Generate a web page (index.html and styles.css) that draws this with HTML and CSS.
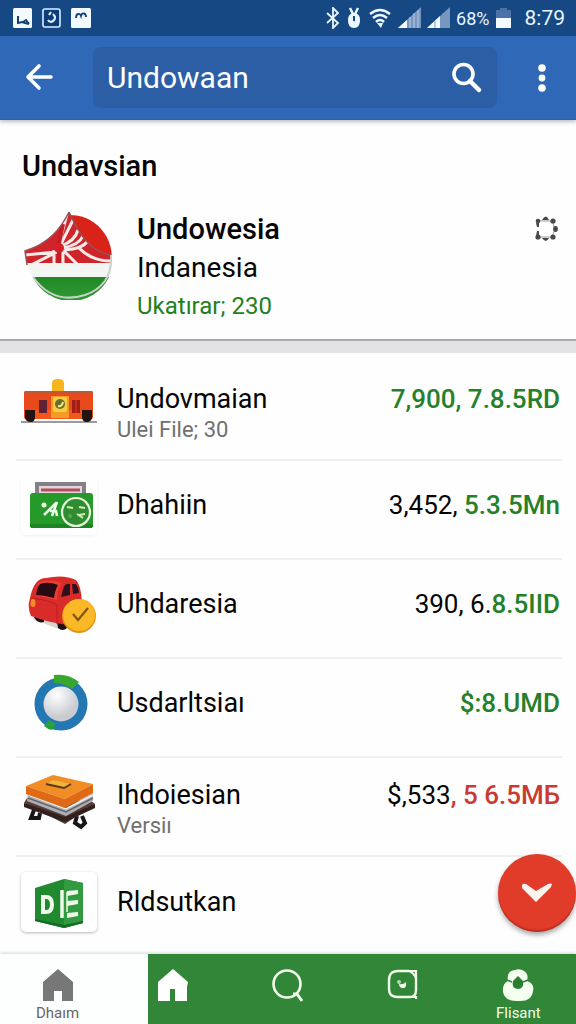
FILE: index.html
```html
<!DOCTYPE html>
<html lang="en">
<head>
<meta charset="utf-8">
<meta name="viewport" content="width=device-width, initial-scale=1">
<title>Undowaan</title>
<link rel="stylesheet" href="styles.css">
</head>
<body>
<div class="screen">
  <div class="status">
    <div class="status-group status-left">
      <svg width="19" height="20" viewBox="0 0 19 20"><rect width="19" height="20" rx="1.5" fill="#f3fbff"/><path d="M5 8v7l4-1 3 1 4 1M10 14l3-2 3 4" fill="none" stroke="#163f75" stroke-width="2"/></svg>
      <svg width="19" height="20" viewBox="0 0 19 20"><rect x="1" y="1" width="17" height="18" rx="2" fill="#0d3d7b" stroke="#d9f1ff" stroke-width="1.6"/><path d="M9 4l-2 3M11 6q4 4 0 7-3 2-5-1" fill="none" stroke="#d9f1ff" stroke-width="2.200"/></svg>
      <svg width="20" height="20" viewBox="0 0 20 20"><rect width="20" height="20" rx="1.5" fill="#f3fbff"/><path d="M5 10c0-5 4-5 5-2 1-4 5-3 5 1" fill="none" stroke="#163f75" stroke-width="1.8"/></svg>
    </div>
    <div class="status-group">
      <svg width="14" height="22" viewBox="0 0 14 22"><path d="M1 6l11 10-5 5V1l5 5L1 16" fill="none" stroke="#eaf7ff" stroke-width="1.8"/></svg>
      <svg width="16" height="22" viewBox="3 0 16 22"><path d="M7 1l3 6M15 1l-3 6" stroke="#eaf7ff" stroke-width="2.500"/><path d="M11 6c4 0 6 3 6 7 0 5-2 8-6 8s-6-3-6-8c0-4 2-7 6-7z" fill="#eaf7ff"/><path d="M10 9v4q0 2 2 1V9z" fill="#174886"/></svg>
      <svg width="24" height="22" viewBox="0 0 24 22"><path d="M2 7q10-8 20 0M5 11q7-6 14 0M8 15q4-4 8 0" fill="none" stroke="#eaf7ff" stroke-width="2.500"/><path d="M9 16h6l-2 5z" fill="#eaf7ff"/></svg>
      <svg width="23" height="22" viewBox="0 0 23 22"><path d="M0 21L23 0v21z" fill="#7897c0"/><path d="M0 21l9-8v8z" fill="#f1faff"/><path d="M12 10v11M16 6v15M20 3v18" stroke="#b9cce2"/></svg>
      <svg width="23" height="22" viewBox="0 0 23 22"><path d="M0 21L23 0v21z" fill="#7897c0"/><path d="M0 21l13-12v12z" fill="#f1faff"/><path d="M8 14v7M16 6v15M20 3v18" stroke="#7897c0"/></svg>
      <span class="battery-text">68%</span>
      <svg width="15" height="22" viewBox="0 0 15 22"><path d="M0 3h4V1h7v2h4v8H0z" fill="#4c73a9"/><path d="M0 11h15v10H0z" fill="#f4fbff"/></svg>
      <span class="clock">8:79</span>
    </div>
  </div>

  <header class="appbar">
    <button class="icon-button" aria-label="Back"><svg width="28" height="30" viewBox="0 0 28 30"><path d="M26 14H3M14 3L3 14l11 11" fill="none" stroke="#fff" stroke-width="3.6" stroke-linecap="round" stroke-linejoin="round"/></svg></button>
    <form class="search">
      <input class="search-input" type="text" aria-label="Search" value="Undowaan">
      <button class="icon-button" type="button" aria-label="Search"><svg width="32" height="32" viewBox="0 0 32 32"><circle cx="12.500" cy="12" r="9.500" fill="none" stroke="#fff" stroke-width="3.6"/><path d="M19 19l9 9" stroke="#fff" stroke-width="4.500" stroke-linecap="round"/></svg></button>
    </form>
    <button class="icon-button" aria-label="More options"><svg width="10" height="30" viewBox="0 0 10 30" fill="#fff"><circle cx="5" cy="5" r="3.8"/><circle cx="5" cy="15" r="3.4"/><circle cx="5" cy="25" r="3.8"/></svg></button>
  </header>

  <main class="content">
    <section class="summary">
      <h1 class="summary-title">Undavsian</h1>
      <div class="profile">
        <svg width="92" height="90" viewBox="-1 0 92 90">
          <defs>
            <clipPath id="cloth"><path d="M46 2C38 18 27 33 2 41l2 14h84l-1-12C67 42 56 24 46 2z"/></clipPath>
            <linearGradient id="green" x2="0" y2="1"><stop stop-color="#218824"/><stop offset="1" stop-color="#309936"/></linearGradient>
          </defs>
          <path d="M44 5a42 42 0 0 1 44 50H48z" fill="#d92218"/>
          <path d="M4 53h85l-5 15H10z" fill="#f3f5f2"/>
          <path d="M10 67h76a42 42 0 0 1-76 0z" fill="url(#green)"/>
          <g clip-path="url(#cloth)">
            <path d="M0 0h92v56H0z" fill="#cf2429"/>
            <path d="M35 38L44 4M37 36L50 10M38 36q14-5 17-16M40 38q16-3 20-12M42 40q17-1 23-9" fill="none" stroke="#f7e9e8" stroke-width="3"/>
            <path d="M33 42L2 45M34 42L4 57M31 40v18M40 40v18M40 40l16 16M56 38q14 14 34 13" fill="none" stroke="#f7e9e8" stroke-width="3"/>
            <path d="M35 38L40 14M36 40v18" stroke="#c61d23" stroke-width="4"/>
            <circle cx="36" cy="38" r="5" fill="#d81f26"/>
          </g>
          <path d="M4 54h84" stroke="#f3f5f2" stroke-width="2"/>
          <path d="M46 2C38 18 27 33 2 41l2 14M46 2c10 22 21 40 42 43" fill="none" stroke="#94535a" stroke-width="1.500"/>
          <path d="M88 45q2 30-26 40-32 10-52-18" fill="none" stroke="#c8d1ca" stroke-width="2"/>
        </svg>
        <div class="profile-text">
          <h2 class="profile-name">Undowesia</h2>
          <p class="profile-line">Indanesia</p>
          <p class="profile-meta">Ukatırar; 230</p>
        </div>
        <button class="icon-button settings" aria-label="Settings"><svg width="24" height="28" viewBox="0 0 24 28"><path d="M4 11V6h14l3 8-3 8H4v-5" fill="none" stroke="#999" stroke-width="1"/><g fill="#484848"><circle cx="4" cy="6" r="2.300"/><path d="M8 5q4-7 7 0z"/><circle cx="19" cy="6" r="2.600"/><ellipse cx="21.500" cy="14" rx="2.400" ry="3"/><circle cx="19" cy="22" r="2.600"/><path d="M8 23h7q-3 6-7 0z"/><circle cx="4" cy="22" r="2.600"/><path d="M2 8h3v4H3zM3 16h2v5H2z"/></g></svg></button>
      </div>
    </section>

    <ul class="list">
      <li class="row row-two">
        <span class="thumb"><svg width="76" height="60" viewBox="0 4 76 60">
          <path d="M0 52h76" stroke="#9b9b9f" stroke-width="2"/>
          <path d="M31 22V13q0-4 6-4t6 4v9z" fill="#f5b51b"/>
          <rect x="3" y="21" width="69" height="28" rx="2" fill="#e94a1c"/><path d="M3 23q0-2 2-2h65q2 0 2 2z" fill="#b95a36"/>
          <path d="M14 40h50v9H14z" fill="#f2571b"/><path d="M30 26h18v22H30z" fill="#f49b23"/>
          <rect x="18" y="30" width="8" height="13" fill="#5d2335"/><rect x="51" y="30" width="8" height="13" fill="#9e1e18"/><path d="M55 30v13" stroke="#e63c1e"/>
          <rect x="32" y="27" width="14" height="15" rx="2" fill="#f7cd45"/><circle cx="39" cy="34" r="5" fill="#66702b"/><path d="M37 36q4 1 5-4" fill="none" stroke="#f6e984" stroke-width="2"/>
          <path d="M4 40h10v7q0 5-4 5-5 0-6-4zM61 40h10v8q-1 4-5 4-5 0-5-5z" fill="#241313"/>
        </svg></span>
        <div class="row-text"><h3 class="row-title">Undovmaian</h3><p class="row-sub">Ulei File; 30</p></div>
        <span class="amount gain">7,900, 7.8.5RD</span>
      </li>
      <li class="row">
        <span class="thumb framed"><svg width="76" height="60" viewBox="0 0 76 60">
          <path d="M16 20V9h47v11" fill="#e1d8db" stroke="#858087" stroke-width="4"/><path d="M20 15h39" stroke="#b64b5c" stroke-width="3"/>
          <rect x="9" y="18" width="63" height="35" rx="3" fill="#259a2b"/><path d="M9 49h63v2q0 2-3 2H12q-3 0-3-2z" fill="#1d8425"/>
          <circle cx="23" cy="30" r="2.500" fill="#e9ffdf"/><path d="M23 40l12-12M31 41l5-14M29 36h6l1 5" fill="none" stroke="#efffe9" stroke-width="2.500"/>
          <circle cx="55" cy="37" r="14" fill="#318c31" stroke="#e4f5dc" stroke-width="2.200"/><path d="M46 32l6 1M58 32l6 1M56 39l6 4M58 40l6-1" stroke="#ceeeb4" stroke-width="2"/><circle cx="49" cy="41" r="2" fill="#57a84b"/>
        </svg></span>
        <div class="row-text"><h3 class="row-title">Dhahiin</h3></div>
        <span class="amount"><span>3,452, </span><span class="gain">5.3.5Mn</span></span>
      </li>
      <li class="row">
        <span class="thumb"><svg width="76" height="60" viewBox="0 0 76 60">
          <path d="M12 45l28 11 15-8-40-7z" fill="#d6d3d3"/>
          <path d="M13 43h10v5q-7 2-10-5zM36 48h10v6q-4 4-9 0z" fill="#201011"/>
          <path d="M9 24q4-20 16-20 18-4 30 2 5 5 6 22l-12 23q-17-1-39-9-4-9-1-18z" fill="#d92c29"/>
          <path d="M17 10q2-3 7-3 9-1 17 2-5 5-5 17-15-3-21-5z" fill="#ec3e35"/>
          <path d="M19 10q8-3 18 1-3 5-4 13-11-3-18-3 1-8 4-11z" fill="#270b13"/><path d="M43 12q3-3 6-2v11l-9 2zM51 10h4q3 4 3 9l-6 1z" fill="#30101b"/>
          <path d="M11 24q20 3 25 7v19" fill="none" stroke="#b71e24"/><ellipse cx="12" cy="29" rx="2.500" ry="4" fill="#f38b2c"/>
          <circle cx="58" cy="42" r="17" fill="#e49415"/><circle cx="58" cy="41" r="16" fill="#fbb928"/>
          <path d="M52 40l5 6 10-12" fill="none" stroke="#835515" stroke-width="2.200"/>
        </svg></span>
        <div class="row-text"><h3 class="row-title">Uhdaresia</h3></div>
        <span class="amount"><span>390, 6.</span><span class="gain">8.5IID</span></span>
      </li>
      <li class="row">
        <span class="thumb"><svg width="76" height="60" viewBox="0 0 76 60">
          <defs><radialGradient id="pearl" cx=".4" cy=".3"><stop stop-color="#fff"/><stop offset="1" stop-color="#c9cbd0"/></radialGradient></defs>
          <circle cx="40" cy="31" r="22" fill="url(#pearl)" stroke="#2378b4" stroke-width="9"/>
          <path d="M33 2q14-2 25 7l-7 7q-8-6-18-6z" fill="#37a72f"/><path d="M28 47l7 4-4 6q-5-1-8-4z" fill="#27a13c"/>
        </svg></span>
        <div class="row-text"><h3 class="row-title">Usdarltsiaı</h3></div>
        <span class="amount gain">$:8.UMD</span>
      </li>
      <li class="row row-two">
        <span class="thumb"><svg width="76" height="60" viewBox="0 -1 76 60">
          <path d="M13 39l-3 8h8l1-5M56 45l-2 7 6 4 4-4-3-7" fill="none" stroke="#191519" stroke-width="4"/>
          <path d="M3 32l3-5 64 3 4 3-30 20z" fill="#573b36"/><path d="M3 32l41 14 30-13v4L44 51 3 36z" fill="#30211f"/>
          <path d="M7 22l38 15 27-15v8L45 45 6 30z" fill="#aeb0b6"/><path d="M7 27l38 14 27-14" fill="none" stroke="#65676e" stroke-width="1.500"/><path d="M8 24l37 14 27-14" fill="none" stroke="#f0eff0" stroke-width="1.500"/>
          <path d="M5 15l27-11 40 9-28 15z" fill="#f18d25"/><path d="M5 15l39 13v9L5 23zM44 28l28-15v9L44 37z" fill="#df6914"/>
          <path d="M25 13l7-4 18 4-6 4z" fill="#efb63d"/><path d="M25 13l18 4 7-4" fill="none" stroke="#593717" stroke-width="1.800"/>
        </svg></span>
        <div class="row-text"><h3 class="row-title">Ihdoiesian</h3><p class="row-sub">Versiı</p></div>
        <span class="amount"><span>$,533</span><span class="loss">, 5 6.5MБ</span></span>
      </li>
      <li class="row">
        <span class="thumb card"><svg width="76" height="60" viewBox="0 0 76 60">
          <path d="M14 16L43 7l19 4v40l-19 5-29-7z" fill="#218a30"/><path d="M43 7l19 4v40l-19 5z" fill="#329a40"/><path d="M14 49l29 7 19-5v-2l-19 4-29-6z" fill="#166c25"/>
          <path d="M22 25v15h3q6 0 6-7.500t-6-7.500z" fill="none" stroke="#effbe9" stroke-width="4"/>
          <path d="M41 18v28" stroke="#effbe9" stroke-width="3.500"/><path d="M46 19l11-1v4l-11 2zM46 29l11-1v4l-11 2zM46 41l11-1v4l-11 2z" fill="#effbe9"/><path d="M46 20v20" stroke="#effbe9" stroke-width="1.500"/>
        </svg></span>
        <div class="row-text"><h3 class="row-title">Rldsutkan</h3></div>
      </li>
    </ul>
  </main>

  <div class="dock">
    <button class="fab" aria-label="Confirm"><svg width="34" height="24" viewBox="0 0 34 24"><path d="M2 4q1-2 4-1l10 7 12-7q3-1 4 0l-1 3L16 21 2 7z" fill="#fff5ef"/></svg></button>
    <nav class="nav">
      <a class="nav-item muted" href="#"><svg width="32" height="34" viewBox="0 0 32 34"><path d="M1 14L16 1l15 13v19H20V23h-8v10H1z" fill="#767776"/></svg><span>Dhaım</span></a>
      <a class="nav-item" href="#" aria-label="Home"><svg width="32" height="34" viewBox="0 0 32 34"><path d="M1 14L16 1l15 13-1 5v14H18V21h-5v12H1z" fill="#fff"/></svg></a>
      <a class="nav-item" href="#" aria-label="Search"><svg width="32" height="36" viewBox="0 0 32 36"><circle cx="15" cy="16" r="13.500" fill="none" stroke="#f2ffec" stroke-width="2.600"/><path d="M21 26h4l5 7" fill="none" stroke="#f2ffec" stroke-width="3"/></svg></a>
      <a class="nav-item" href="#" aria-label="Scan"><svg width="32" height="34" viewBox="0 0 32 34"><path d="M22 3H11Q2 3 2 12v9q0 8 8 8h13q6 0 6-7V10" fill="none" stroke="#f2ffec" stroke-width="2.400"/><path d="M22 3h7v7M22 3q5 2 7 7M25 29h4v2" fill="none" stroke="#f2ffec" stroke-width="2.200"/><path d="M12 16q4 1 7-2 1 7-4 6-3-1-3-4z" fill="#f2ffec"/><circle cx="12" cy="14" r="2" fill="#b5d8b0"/></svg></a>
      <a class="nav-item" href="#"><svg width="32" height="34" viewBox="0 0 32 34"><path d="M6 13Q4 3 13 2q5-2 9 1 5 3 3 10 8 3 6 10-1 10-13 10h-4Q3 33 1 24q-1-8 5-11z" fill="#f4fff0"/><path d="M16 8l5 5q1 8-5 8-7-1-5-8z" fill="#2b7e31"/><path d="M5 12l5 2M26 12l-5 2" stroke="#318637" stroke-width="1.500"/></svg><span>Flisant</span></a>
    </nav>
  </div>
</div>
</body>
</html>
```
FILE: styles.css
```css
* { box-sizing: border-box; }

body {
  margin: 0;
  font-family: Roboto, "Liberation Sans", sans-serif;
  background: #fefefe;
  color: #050505;
}

h1, h2, h3, p, ul { margin: 0; padding: 0; font-weight: 400; }
svg { display: block; flex: none; }

button {
  border: 0;
  padding: 0;
  background: none;
  font: inherit;
  color: inherit;
}

.icon-button { display: grid; place-items: center; }

.screen {
  display: flex;
  flex-direction: column;
  min-height: 100vh;
}

.status {
  display: flex;
  justify-content: space-between;
  align-items: center;
  height: 36px;
  padding: 0 11px 0 13px;
  background: #164884;
  color: #eaf7ff;
}

.status-group { display: flex; align-items: center; gap: 6px; }
.status-left { gap: 10px; }
.battery-text { font-size: 18px; }
.clock { font-size: 21px; margin-left: 8px; }

.appbar {
  display: flex;
  align-items: center;
  gap: 40px;
  height: 84px;
  padding: 0 29px 0 25px;
  background: #2f68b6;
  border-bottom: 1px solid #3e608e;
  box-shadow: 0 2px 4px rgba(0, 0, 0, 0.25);
  position: relative;
  z-index: 1;
}

.search {
  flex: 1;
  min-width: 0;
  display: flex;
  align-items: center;
  height: 61px;
  padding: 0 14px;
  border-radius: 8px;
  background: #2c5ea5;
}

.search-input {
  flex: 1;
  min-width: 0;
  border: 0;
  padding: 0;
  outline: 0;
  background: none;
  color: #fff;
  font: 400 30px/36px Roboto, "Liberation Sans", sans-serif;
}

.content { flex: 1; background: #fefefe; }

.summary {
  padding: 28px 18px 15px 22px;
  border-bottom: 2px solid #a9a9ab;
}

.summary-title { font-size: 29px; line-height: 36px; font-weight: 500; }

.profile {
  display: flex;
  gap: 23px;
  margin-top: 26px;
}

.profile-text { flex: 1; }
.profile-name { font-size: 29px; line-height: 38px; font-weight: 500; }
.profile-line { font-size: 28px; line-height: 40px; }
.profile-meta { font-size: 24px; line-height: 36px; color: #237f1d; }
.settings { align-self: flex-start; margin-top: 5px; }

.list {
  list-style: none;
  padding: 9px 14px 0 16px;
  border-top: 12px solid #e3e3e5;
}

.row {
  display: flex;
  align-items: center;
  gap: 20px;
  min-height: 99px;
  padding: 0 2px 10px 5px;
  border-bottom: 2px solid #f0f0f0;
}

.row-two { align-items: flex-start; padding-top: 12px; }
.row-two .row-text, .row-two .amount { padding-top: 8px; }

.row:last-child { border-bottom: 0; min-height: 94px; padding-bottom: 4px; }

.thumb {
  display: grid;
  place-items: center;
  width: 76px;
  height: 60px;
  flex: none;
  border-radius: 5px;
}

.framed { box-shadow: 0 1px 3px rgba(0, 0, 0, 0.06); }
.card { background: #fff; box-shadow: 0 1px 3px rgba(0, 0, 0, 0.28); }

.row-text { flex: 1; min-width: 0; }
.row-title { font-size: 27px; line-height: 34px; font-weight: 400; }
.row-sub { font-size: 22px; line-height: 28px; color: #707070; }

.amount { font-size: 26px; line-height: 34px; white-space: pre; }
.gain { color: #26802a; font-weight: 500; }
.loss { color: #c83a32; font-weight: 500; }

.dock { position: sticky; bottom: 0; z-index: 2; }

.fab {
  position: absolute;
  right: 0;
  bottom: 92px;
  display: grid;
  place-items: center;
  width: 78px;
  height: 78px;
  border-radius: 50%;
  background: #e13b29;
  box-shadow: 0 3px 5px rgba(0, 0, 0, 0.35), inset 0 -2px 1px #be3023;
}

.nav {
  display: grid;
  grid-template-columns: repeat(5, 1fr);
  height: 70px;
  background: linear-gradient(90deg, #fdfefe 0 25.7%, #318637 25.7%);
  box-shadow: 0 -2px 2px #e4e6e4;
}

.nav-item {
  display: flex;
  flex-direction: column;
  align-items: center;
  gap: 2px;
  padding-top: 14px;
  color: #f2ffec;
  font-size: 15px;
  line-height: 18px;
  text-decoration: none;
}

.muted { color: #666; }
```
